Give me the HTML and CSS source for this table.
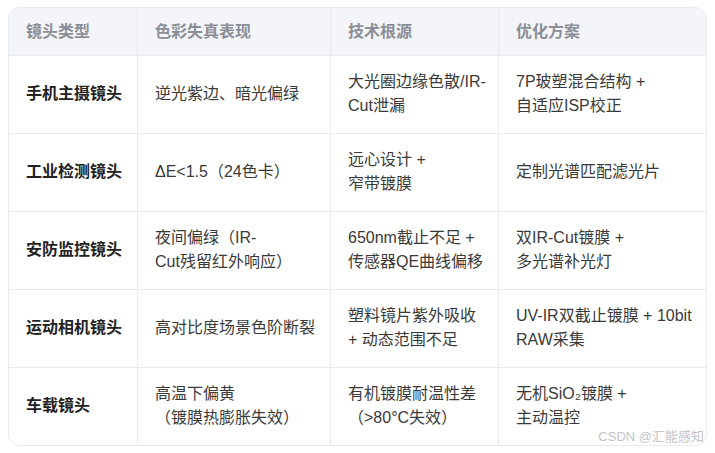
FILE: index.html
```html
<!DOCTYPE html>
<html lang="zh">
<head>
<meta charset="utf-8">
<link rel="stylesheet" href="styles.css">
</head>
<body>
<div class="page">
  <div class="card">
    <table class="grid">
      <colgroup>
        <col class="c1"><col class="c2"><col class="c3"><col class="c4">
      </colgroup>
      <thead>
        <tr><th>镜头类型</th><th>色彩失真表现</th><th>技术根源</th><th>优化方案</th></tr>
      </thead>
      <tbody>
        <tr>
          <td class="name">手机主摄镜头</td>
          <td>逆光紫边、暗光偏绿</td>
          <td>大光圈边缘色散/IR-<br>Cut泄漏</td>
          <td>7P玻塑混合结构 +<br>自适应ISP校正</td>
        </tr>
        <tr>
          <td class="name">工业检测镜头</td>
          <td>ΔE&lt;1.5（24色卡）</td>
          <td>远心设计 +<br>窄带镀膜</td>
          <td>定制光谱匹配滤光片</td>
        </tr>
        <tr>
          <td class="name">安防监控镜头</td>
          <td>夜间偏绿（IR-<br>Cut残留红外响应）</td>
          <td>650nm截止不足 +<br>传感器QE曲线偏移</td>
          <td>双IR-Cut镀膜 +<br>多光谱补光灯</td>
        </tr>
        <tr>
          <td class="name">运动相机镜头</td>
          <td>高对比度场景色阶断裂</td>
          <td>塑料镜片紫外吸收<br>+ 动态范围不足</td>
          <td>UV-IR双截止镀膜 + 10bit<br>RAW采集</td>
        </tr>
        <tr class="last">
          <td class="name">车载镜头</td>
          <td>高温下偏黄<br>（镀膜热膨胀失效）</td>
          <td>有机镀膜耐温性差<br>（&gt;80°C失效）</td>
          <td>无机SiO₂镀膜 +<br>主动温控</td>
        </tr>
      </tbody>
    </table>
    <div class="mark">CSDN @汇能感知</div>
  </div>
</div>
</body>
</html>
```

FILE: styles.css
```css
html, body {
  margin: 0;
  padding: 0;
  background: #ffffff;
}
.page {
  padding: 7px 9px 0 8px;
  font-family: "Liberation Sans", "Noto Sans CJK SC", sans-serif;
  font-size: 16px;
  color: #3a3a3a;
}
.card {
  position: relative;
  width: 697px;
  border: 1px solid #e9eaee;
  border-radius: 12px;
  overflow: hidden;
}
.grid {
  border-collapse: separate;
  border-spacing: 0;
  table-layout: fixed;
  width: 697px;
}
.c1 { width: 129px; }
.c2 { width: 193px; }
.c3 { width: 168px; }
.c4 { width: 207px; }
.grid th,
.grid td {
  text-align: left;
  vertical-align: middle;
  white-space: nowrap;
  line-height: 24px;
  border-right: 1px solid #ebebee;
  border-bottom: 1px solid #ebebee;
}
.grid th:last-child,
.grid td:last-child {
  border-right: none;
}
.grid th {
  background: #f4f5f8;
  color: #8b8e97;
  font-weight: 600;
  padding: 12px 10px 11px 17px;
}
.grid td {
  height: 48px;
  padding: 14px 10px 15px 17px;
}
.grid tr.last td {
  border-bottom: none;
}
.grid td.name {
  font-weight: 700;
  color: #222222;
}
.mark {
  position: absolute;
  right: 2px;
  bottom: 0;
  font-size: 13px;
  line-height: 17px;
  color: #c4c4c8;
  text-shadow: 0 0 2px #ffffff, 0 0 2px #ffffff;
}
```
